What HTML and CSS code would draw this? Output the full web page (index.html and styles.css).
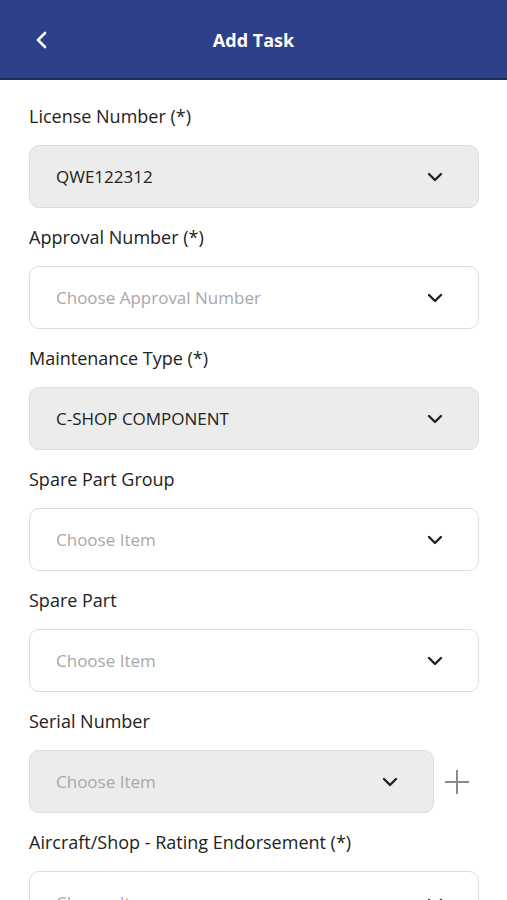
FILE: index.html
```html
<!DOCTYPE html>
<html lang="en">
<head>
    <meta charset="UTF-8">
    <meta name="viewport" content="width=device-width, initial-scale=1.0">
    <title>Add Task</title>
    <link rel="stylesheet" href="styles.css">
</head>
<body>

    <div class="header">
        <span class="back">
            <svg width="14" height="18" viewBox="0 0 14 18"><path d="M10 2 L3 9 L10 16" fill="none" stroke="#fff" stroke-width="2.6" stroke-linecap="round" stroke-linejoin="round"/></svg>
        </span>
        <h1>Add Task</h1>
    </div>

    <div class="form">
        <div class="field">
            <label>License Number (*)</label>
            <div class="select filled">
                <span class="value">QWE122312</span>
                <svg class="chevron" width="16" height="10" viewBox="0 0 16 10"><path d="M2 2 L8 8 L14 2" fill="none" stroke="#222" stroke-width="2.4" stroke-linecap="round" stroke-linejoin="round"/></svg>
            </div>
        </div>

        <div class="field">
            <label>Approval Number (*)</label>
            <div class="select">
                <span class="placeholder">Choose Approval Number</span>
                <svg class="chevron" width="16" height="10" viewBox="0 0 16 10"><path d="M2 2 L8 8 L14 2" fill="none" stroke="#222" stroke-width="2.4" stroke-linecap="round" stroke-linejoin="round"/></svg>
            </div>
        </div>

        <div class="field">
            <label>Maintenance Type (*)</label>
            <div class="select filled">
                <span class="value">C-SHOP COMPONENT</span>
                <svg class="chevron" width="16" height="10" viewBox="0 0 16 10"><path d="M2 2 L8 8 L14 2" fill="none" stroke="#222" stroke-width="2.4" stroke-linecap="round" stroke-linejoin="round"/></svg>
            </div>
        </div>

        <div class="field">
            <label>Spare Part Group</label>
            <div class="select">
                <span class="placeholder">Choose Item</span>
                <svg class="chevron" width="16" height="10" viewBox="0 0 16 10"><path d="M2 2 L8 8 L14 2" fill="none" stroke="#222" stroke-width="2.4" stroke-linecap="round" stroke-linejoin="round"/></svg>
            </div>
        </div>

        <div class="field">
            <label>Spare Part</label>
            <div class="select">
                <span class="placeholder">Choose Item</span>
                <svg class="chevron" width="16" height="10" viewBox="0 0 16 10"><path d="M2 2 L8 8 L14 2" fill="none" stroke="#222" stroke-width="2.4" stroke-linecap="round" stroke-linejoin="round"/></svg>
            </div>
        </div>

        <div class="field">
            <label>Serial Number</label>
            <div class="row">
                <div class="select filled">
                    <span class="placeholder">Choose Item</span>
                    <svg class="chevron" width="16" height="10" viewBox="0 0 16 10"><path d="M2 2 L8 8 L14 2" fill="none" stroke="#222" stroke-width="2.4" stroke-linecap="round" stroke-linejoin="round"/></svg>
                </div>
                <span class="add">
                    <svg width="26" height="26" viewBox="0 0 26 26"><path d="M13 1 V25 M1 13 H25" fill="none" stroke="#8a8a8a" stroke-width="2"/></svg>
                </span>
            </div>
        </div>

        <div class="field">
            <label>Aircraft/Shop - Rating Endorsement (*)</label>
            <div class="select">
                <span class="placeholder">Choose Item</span>
                <svg class="chevron" width="16" height="10" viewBox="0 0 16 10"><path d="M2 2 L8 8 L14 2" fill="none" stroke="#222" stroke-width="2.4" stroke-linecap="round" stroke-linejoin="round"/></svg>
            </div>
        </div>
    </div>

</body>
</html>
```

FILE: styles.css
```css
body {
    font-family: 'Open Sans', 'Liberation Sans', sans-serif;
    background-color: #fff;
    margin: 0;
    padding: 0;
    color: #222;
}

.header {
    height: 78px;
    background-color: #2e3f8b;
    border-bottom: 2px solid #1f2a55;
    display: flex;
    align-items: center;
    justify-content: center;
    position: relative;
}

.header h1 {
    margin: 0;
    color: #fff;
    font-size: 18px;
    font-weight: 700;
    padding-top: 2px;
}

.back {
    position: absolute;
    left: 35px;
    top: 31px;
}

.form {
    padding: 24px 28px 0 29px;
}

.field {
    margin-bottom: 17px;
}

.field label {
    display: block;
    font-size: 18px;
    line-height: 24px;
    margin-bottom: 17px;
    color: #222;
}

.select {
    height: 63px;
    box-sizing: border-box;
    border: 1px solid #dcdcdc;
    border-radius: 10px;
    background-color: #fff;
    display: flex;
    align-items: center;
    justify-content: space-between;
    padding: 0 35px 0 26px;
    font-size: 17px;
}

.select.filled {
    background-color: #ececec;
}

.value {
    color: #222;
}

.placeholder {
    color: #a8a8a8;
}

.row {
    display: flex;
    align-items: center;
}

.row .select {
    width: 405px;
}

.add {
    margin-left: 10px;
    display: flex;
}
```
